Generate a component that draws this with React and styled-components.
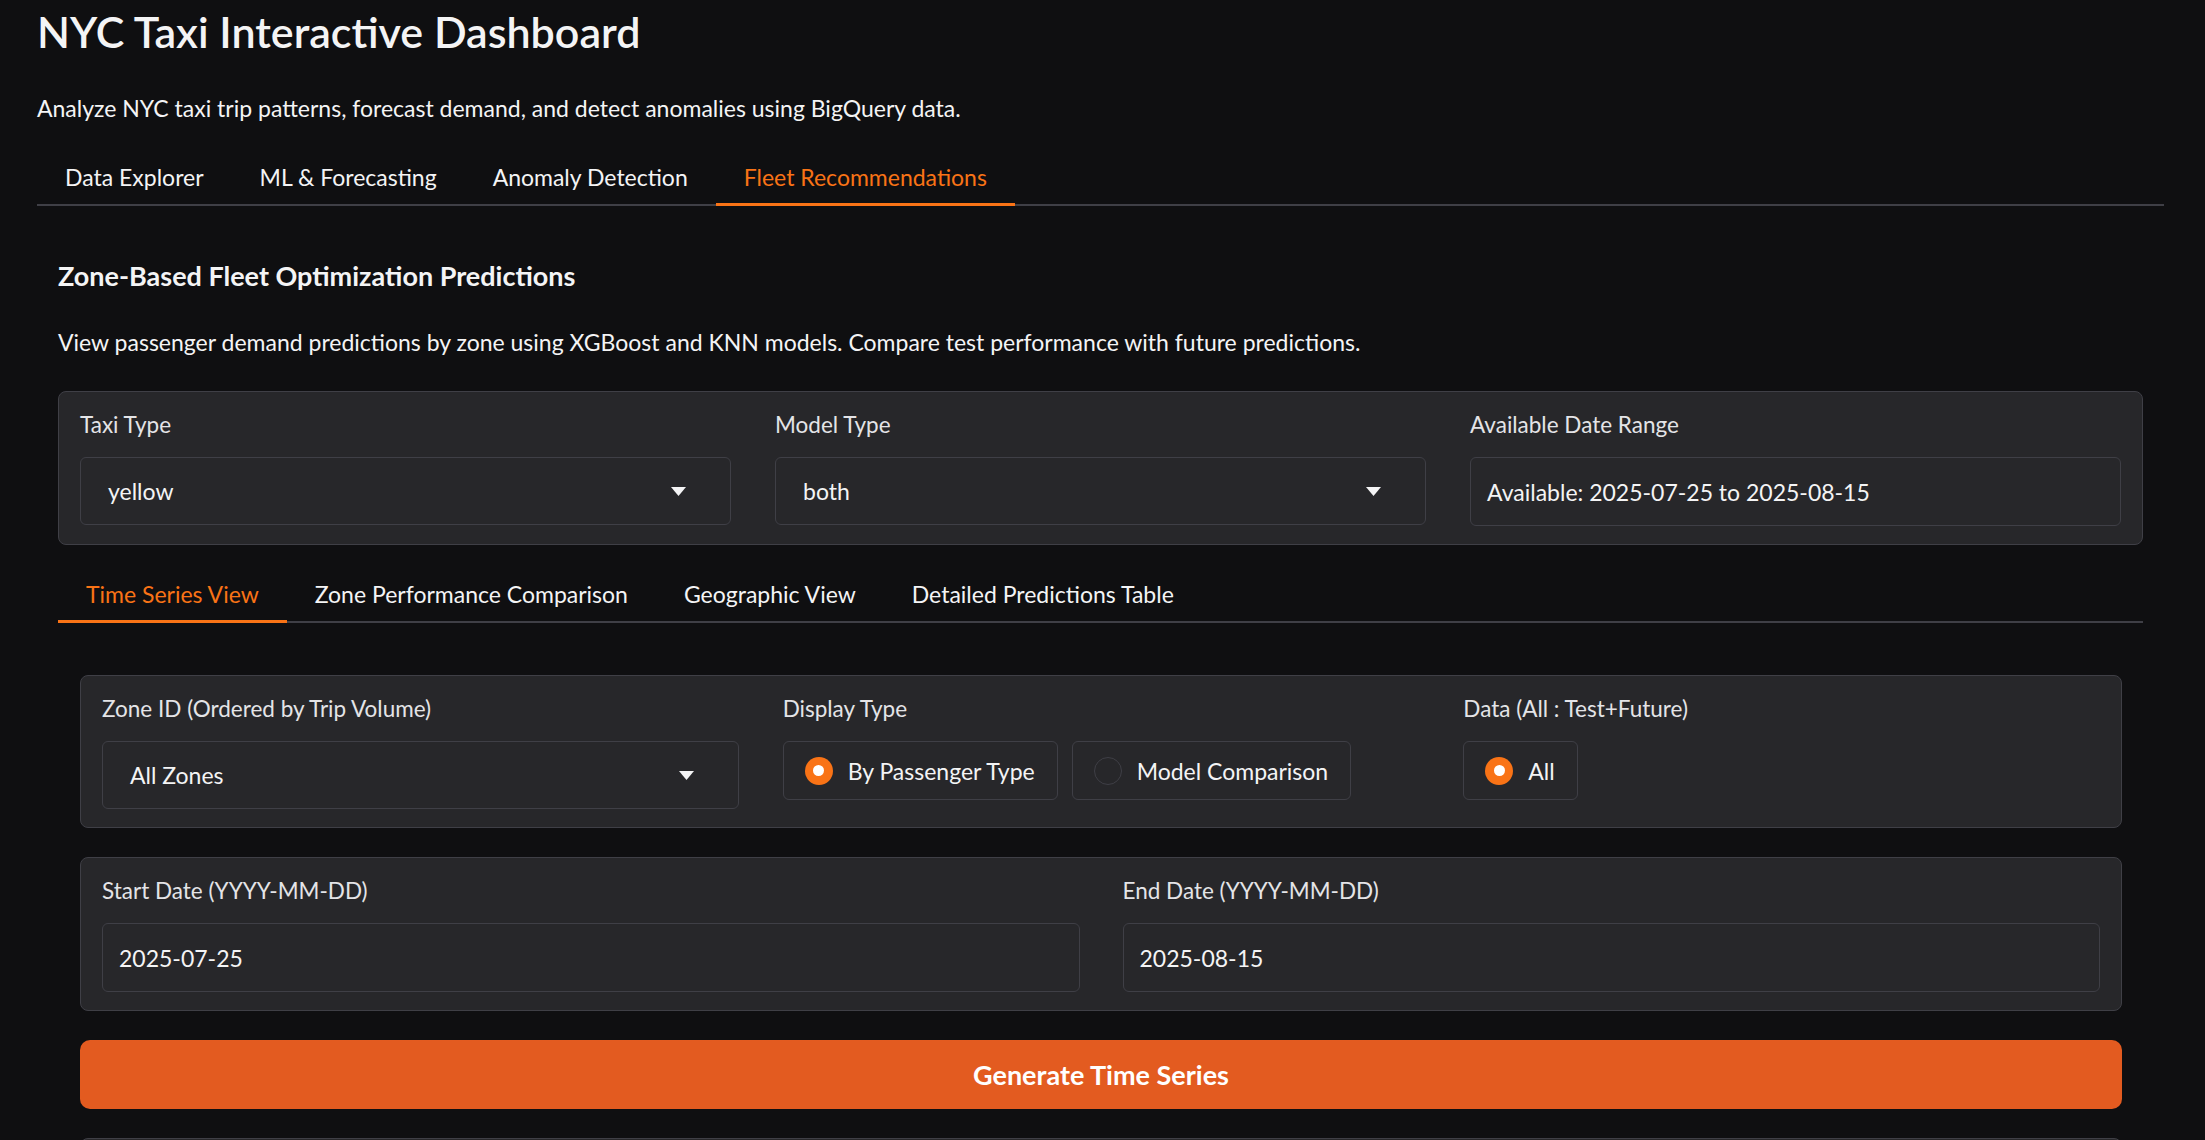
import React from "react";
import styled, { createGlobalStyle } from "styled-components";

const GlobalStyle = createGlobalStyle`
	html, body {
		margin: 0;
		padding: 0;
		background: #0f0f11;
		overflow: hidden;
	}
	body {
		font-family: Lato, "Noto Sans", sans-serif;
		color: #f4f4f5;
	}
`

const Page = styled.div`
	padding: 0 41px 0 37px;
`

const Title = styled.h1`
	margin: 0;
	font-size: 43px;
	line-height: 64px;
	font-weight: 600;
`

const Subtitle = styled.p`
	margin: 27px 0 0;
	font-size: 23px;
	line-height: 34px;
`

const TabBar = styled.div`
	display: flex;
	margin-top: ${p => p.$top}px;
	box-shadow: inset 0 -2px 0 #3f3f46;
`

const Tab = styled.button`
	appearance: none;
	background: none;
	border: 0;
	margin: 0;
	padding: 12px 28px;
	font-family: inherit;
	font-size: 23px;
	line-height: 34px;
	color: ${p => (p.$active ? "#f97316" : "#f4f4f5")};
	box-shadow: ${p => (p.$active ? "inset 0 -3px 0 #f97316" : "none")};
	cursor: pointer;
`

const TabPanel = styled.div`
	padding: 52px 21px 0 ${p => p.$left}px;
`

const Heading = styled.h3`
	margin: 0 0 31px;
	font-size: 27px;
	line-height: 36px;
	font-weight: 700;
`

const Description = styled.p`
	margin: 0 0 32px;
	font-size: 23px;
	line-height: 34px;
`

const Panel = styled.div`
	display: grid;
	grid-template-columns: repeat(${p => p.$cols}, 1fr);
	column-gap: ${p => p.$gap}px;
	margin-top: ${p => p.$top || 0}px;
	padding: 17px 21px 18px;
	background: #27272a;
	border: 1px solid #3f3f46;
	border-radius: 8px;
`

const Field = styled.div`
	display: flex;
	flex-direction: column;
	min-width: 0;
`

const Label = styled.span`
	margin-bottom: 16px;
	font-size: 22.5px;
	line-height: 32px;
	color: #e4e4e7;
`

const InputBox = styled.div`
	display: flex;
	align-items: center;
	justify-content: space-between;
	height: ${p => p.$h || 68}px;
	box-sizing: border-box;
	padding: ${p => (p.$select ? "0 44px 0 27px" : "0 16px")};
	background: #27272a;
	border: 1px solid #3f3f46;
	border-radius: 6px;
	font-size: 23px;
	line-height: 34px;
	color: #f4f4f5;
`

const Arrow = styled.svg`
	width: 15px;
	height: 9px;
	fill: #f4f4f5;
`

const RadioGroup = styled.div`
	display: flex;
	gap: 14px;
`

const RadioItem = styled.label`
	display: flex;
	align-items: center;
	gap: 15px;
	height: 59px;
	box-sizing: border-box;
	padding: 0 22px 0 21px;
	border: 1px solid #3f3f46;
	border-radius: 6px;
	font-size: 23px;
	color: #f4f4f5;
`

const RadioMark = styled.span`
	display: flex;
	align-items: center;
	justify-content: center;
	width: 28px;
	height: 28px;
	box-sizing: border-box;
	border-radius: 50%;
	background: ${p => (p.$checked ? "#f97316" : "#27272a")};
	border: ${p => (p.$checked ? "none" : "1.5px solid #3f3f46")};

	&::after {
		content: "";
		display: ${p => (p.$checked ? "block" : "none")};
		width: 11px;
		height: 11px;
		border-radius: 50%;
		background: #fff;
	}
`

const PrimaryButton = styled.button`
	display: block;
	width: 100%;
	height: 69px;
	margin-top: 29px;
	border: 0;
	border-radius: 10px;
	background: #e35b20;
	color: #fff;
	font-family: inherit;
	font-size: 27px;
	font-weight: 700;
	cursor: pointer;
`

const PlotBlock = styled.div`
	height: 160px;
	margin-top: 29px;
	background: #27272a;
	border: 1px solid #3f3f46;
	border-radius: 8px;
`

const Select = ({ value }) => (
	<InputBox $select>
		<span>{value}</span>
		<Arrow viewBox="0 0 15 9"><path d="M0 0h15L7.5 9z" /></Arrow>
	</InputBox>
)

const Radio = ({ label, checked }) => (
	<RadioItem>
		<RadioMark $checked={checked} />
		{label}
	</RadioItem>
)

const mainTabs = ["Data Explorer", "ML & Forecasting", "Anomaly Detection", "Fleet Recommendations"];
const subTabs = ["Time Series View", "Zone Performance Comparison", "Geographic View", "Detailed Predictions Table"];

const App = () => {
	return (
		<Page>
			<GlobalStyle />
			<Title>NYC Taxi Interactive Dashboard</Title>
			<Subtitle>Analyze NYC taxi trip patterns, forecast demand, and detect anomalies using BigQuery data.</Subtitle>
			<TabBar $top={23}>
				{mainTabs.map(t => (
					<Tab key={t} $active={t === "Fleet Recommendations"}>{t}</Tab>
				))}
			</TabBar>
			<TabPanel $left={21}>
				<Heading>Zone-Based Fleet Optimization Predictions</Heading>
				<Description>
					View passenger demand predictions by zone using XGBoost and KNN models. Compare test performance with future predictions.
				</Description>
				<Panel $cols={3} $gap={44}>
					<Field>
						<Label>Taxi Type</Label>
						<Select value="yellow" />
					</Field>
					<Field>
						<Label>Model Type</Label>
						<Select value="both" />
					</Field>
					<Field>
						<Label>Available Date Range</Label>
						<InputBox $h={69}>Available: 2025-07-25 to 2025-08-15</InputBox>
					</Field>
				</Panel>
				<TabBar $top={20}>
					{subTabs.map(t => (
						<Tab key={t} $active={t === "Time Series View"}>{t}</Tab>
					))}
				</TabBar>
				<TabPanel $left={22}>
					<Panel $cols={3} $gap={44}>
						<Field>
							<Label>Zone ID (Ordered by Trip Volume)</Label>
							<Select value="All Zones" />
						</Field>
						<Field>
							<Label>Display Type</Label>
							<RadioGroup>
								<Radio label="By Passenger Type" checked />
								<Radio label="Model Comparison" />
							</RadioGroup>
						</Field>
						<Field>
							<Label>Data (All : Test+Future)</Label>
							<RadioGroup>
								<Radio label="All" checked />
							</RadioGroup>
						</Field>
					</Panel>
					<Panel $cols={2} $gap={43} $top={29}>
						<Field>
							<Label>Start Date (YYYY-MM-DD)</Label>
							<InputBox $h={69}>2025-07-25</InputBox>
						</Field>
						<Field>
							<Label>End Date (YYYY-MM-DD)</Label>
							<InputBox $h={69}>2025-08-15</InputBox>
						</Field>
					</Panel>
					<PrimaryButton>Generate Time Series</PrimaryButton>
					<PlotBlock />
				</TabPanel>
			</TabPanel>
		</Page>
	);
}

export default App;
